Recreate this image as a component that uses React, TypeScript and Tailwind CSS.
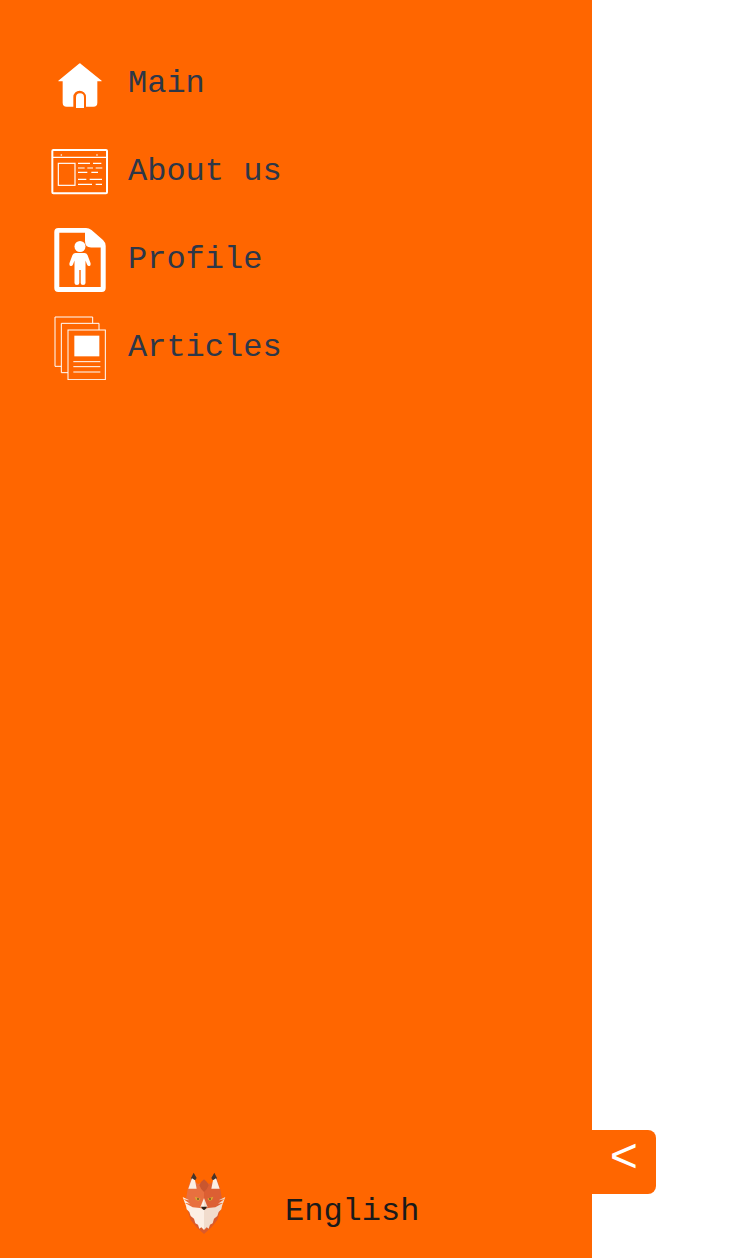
import React from "react";

const Home = () => (
  <svg width="64" height="64" viewBox="24 6 192 192">
    <path fill="#fff" fillRule="evenodd" d="M120 40 L185 92 Q186 94 183 94 L172 94 L172 158 Q172 170 160 170 L138 170 L138 141 A19 19 0 0 0 100 141 L100 170 L80 170 Q68 170 68 158 L68 94 L57 94 Q54 94 55 92 L116 42 Q120 38 124 42 Z" />
    <path fill="#fff" d="M108 174 L108 142 A12 12 0 0 1 132 142 L132 174 Z" />
  </svg>
);

const Browser = () => (
  <svg width="64" height="64" viewBox="0 -15 192 192" fill="none" stroke="#fff">
    <rect x="13" y="15" width="164" height="130" rx="3" strokeWidth="6" />
    <path d="M13 37 H177" strokeWidth="3.500" />
    <circle cx="40" cy="30" r="2.500" fill="#fff" stroke="none" />
    <circle cx="147" cy="30" r="2.500" fill="#fff" stroke="none" />
    <rect x="31" y="55" width="50" height="66" strokeWidth="3.500" />
    <path strokeWidth="3.500" d="M90 55 H126 M135 55 H160 M90 69 H110 M118 69 H135 M143 69 H163 M90 82 H118 M130 82 H150 M90 103 H115 M125 103 H162 M90 118 H132 M143 118 H162" />
  </svg>
);

const ProfileDoc = () => (
  <svg width="64" height="64" viewBox="0 0 64 64">
    <path fill="#fff" fillRule="evenodd" d="M10.300 0 H38 Q41 0 43.500 2 L55 12 Q57.700 14.500 57.700 18 V60 Q57.700 64 53.700 64 H10.300 Q6.300 64 6.300 60 V4 Q6.300 0 10.300 0 Z M11.300 4.700 V59 H52.700 V19.500 H43 Q37 19.500 37 13 V4.700 Z" />
    <circle cx="32" cy="18.500" r="5.500" fill="#fff" />
    <path fill="#fff" d="M27.500 25 H36.500 Q38.500 25 39.500 27 L42.500 35 Q43 37.500 41.500 38 Q40 38.500 39 36.500 L37.500 32.500 V55 Q37.500 57 35 57 Q32.700 57 32.700 55 V42 H31.300 V55 Q31.300 57 29 57 Q26.500 57 26.500 55 V32.500 L25 36.500 Q24 38.500 22.500 38 Q21 37.500 21.500 35 L24.500 27 Q25.500 25 27.500 25 Z" />
  </svg>
);

const Papers = () => (
  <svg width="64" height="64" viewBox="-7 11 192 192" fill="none" stroke="#fff" strokeWidth="3">
    <path d="M33 162 H14 V14 H127 V33" />
    <path d="M53 181 H33 V33 H146 V53" />
    <rect x="53" y="53" width="112" height="149" />
    <rect x="72" y="70" width="75" height="62" fill="#fff" stroke="none" />
    <path d="M69 148 H150 M69 163 H150 M69 179 H150" strokeWidth="3" />
  </svg>
);

const Fox = () => (
  <svg width="64" height="64" viewBox="-18 6 192 192">
    <path fill="#d95a2b" d="M26 112 L38 150 L56 172 L78 192 L100 172 L118 150 L130 112 Z" />
    <path fill="#e8703f" d="M78 36 L60 42 L52 36 L40 22 L29 58 L24 88 L38 130 L78 170 Z" />
    <path fill="#dc5f33" d="M78 36 L96 42 L104 36 L116 22 L127 58 L132 88 L118 130 L78 170 Z" />
    <path fill="#47342a" d="M39 24 L47 8 L56 24 L52 30 L42 30 Z M117 24 L109 8 L100 24 L104 30 L114 30 Z" />
    <path fill="#fbeee4" d="M31 56 L42 25 L51 31 L56 56 Z M125 56 L114 25 L105 31 L100 56 Z" />
    <path fill="#c9562e" d="M64 46 Q70 33 78 28 Q86 33 92 46 Q88 58 78 66 Q68 58 64 46 Z" />
    <path fill="#fcefe5" d="M14 81 L34 91 L17 88 L36 101 L20 98 L44 112 L66 114 L78 118 L78 180 L70 172 L64 176 L60 164 L52 160 L48 146 L38 138 L34 126 L26 118 L24 108 Z" />
    <path fill="#f1dccd" d="M142 81 L122 91 L139 88 L120 101 L136 98 L112 112 L90 114 L78 118 L78 180 L86 172 L92 176 L96 164 L104 160 L108 146 L118 138 L122 126 L130 118 L132 108 Z" />
    <path fill="#fcefe5" d="M78 84 L67 112 H78 Z" />
    <path fill="#f1dccd" d="M78 84 L89 112 H78 Z" />
    <path fill="#dcaa2f" d="M50 80 L68 86 L62 92 L54 90 Z M106 80 L88 86 L94 92 L102 90 Z" />
    <circle cx="60" cy="87" r="2.500" fill="#33241b" />
    <circle cx="96" cy="87" r="2.500" fill="#33241b" />
    <path fill="#2b2118" d="M69 110 H87 L82 118 Q78 122 74 118 Z" />
  </svg>
);

const items: { label: string; icon: React.ReactNode }[] = [
  { label: "Main", icon: <Home /> },
  { label: "About us", icon: <Browser /> },
  { label: "Profile", icon: <ProfileDoc /> },
  { label: "Articles", icon: <Papers /> },
];

export default function App() {
  return (
    <div className="relative h-[1258px] w-[750px] overflow-hidden bg-white font-['Liberation_Mono',monospace]">
      <aside className="flex h-full w-[592px] flex-col justify-between bg-[#ff6600] pb-[22px] pt-10">
        <nav className="flex flex-col pl-12">
          {items.map((item) => (
            <a key={item.label} className="flex h-[88px] items-center gap-4">
              <span className="block h-16 w-16 shrink-0">{item.icon}</span>
              <span className="text-[32px] leading-[48px] text-[#2d3748]">{item.label}</span>
            </a>
          ))}
        </nav>
        <div className="flex items-end pl-[172px]">
          <span className="block h-16 w-16 shrink-0"><Fox /></span>
          <span className="ml-[49px] text-[32px] leading-[48px] text-[#1a1a1a]">English</span>
        </div>
      </aside>
      <button className="absolute left-[592px] top-[1130px] flex h-16 w-16 items-center justify-center rounded-r-lg bg-[#ff6600] pb-[6px] text-[48px] leading-[58px] text-white">
        &lt;
      </button>
    </div>
  );
}
